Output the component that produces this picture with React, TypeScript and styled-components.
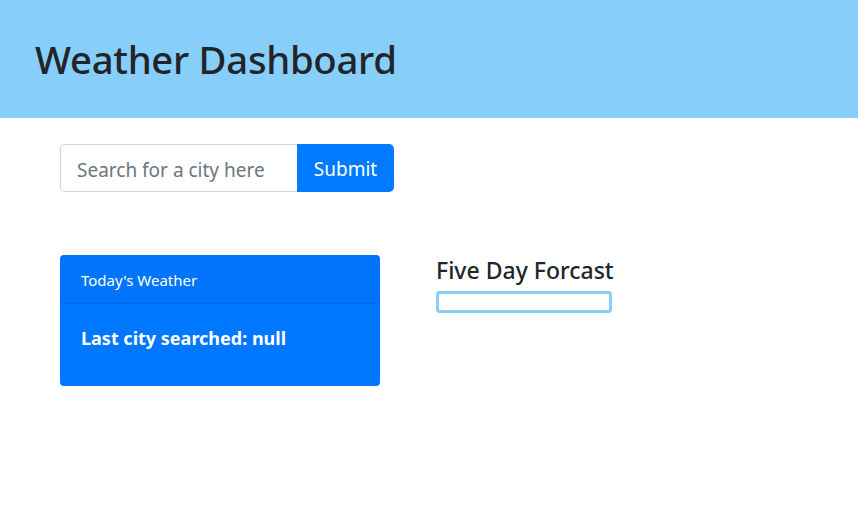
import React from "react";
import styled, { createGlobalStyle } from "styled-components";

const Global = createGlobalStyle`
  html, body { margin: 0; padding: 0; background: #fff; }
  body { font-family: "Noto Sans", "Open Sans", sans-serif; color: #212529; }
  * { box-sizing: border-box; }
`;

const Header = styled.header`
  background: #87cefa;
  height: 118px;
  display: flex;
  align-items: center;
  padding-left: 35px;
`;

const Title = styled.h1`
  margin: 0;
  font-size: 38.3px;
  font-weight: 500;
  color: #212529;
  letter-spacing: -0.3px;
`;

const Main = styled.main`
  padding: 26px 0 0 60px;
`;

const SearchForm = styled.form`
  display: flex;
  height: 48px;
`;

const SearchInput = styled.input`
  width: 237px;
  height: 48px;
  border: 1px solid #ced4da;
  border-right: none;
  border-radius: 5px 0 0 5px;
  padding: 3px 16px 0 16px;
  font-family: inherit;
  font-size: 19px;
  color: #495057;
  outline: none;
  &::placeholder { color: #6c757d; }
`;

const SubmitButton = styled.button`
  width: 97px;
  height: 48px;
  border: none;
  background: #007bff;
  color: #fff;
  font-family: inherit;
  font-size: 19px;
  border-radius: 0 5px 5px 0;
  padding: 2px 0 0 0;
`;

const Row = styled.div`
  display: flex;
  align-items: flex-start;
  gap: 56px;
  margin-top: 63px;
`;

const Card = styled.section`
  width: 320px;
  height: 131px;
  background: #0077ff;
  border-radius: 4px;
  color: #fff;
  overflow: hidden;
`;

const CardHeader = styled.div`
  height: 49px;
  padding: 1px 21px 0 21px;
  display: flex;
  align-items: center;
  font-size: 15px;
  border-bottom: 1px solid rgba(0, 0, 0, 0.08);
  background: rgba(0, 0, 0, 0.01);
`;

const CardBody = styled.div`
  padding: 22px 21px;
`;

const CardTitle = styled.h5`
  margin: 0;
  font-size: 18px;
  font-weight: 700;
  line-height: 24px;
`;

const Forecast = styled.section`
  display: flex;
  flex-direction: column;
  align-items: flex-start;
  padding-top: 0;
`;

const ForecastTitle = styled.h4`
  margin: 0;
  font-size: 23px;
  font-weight: 500;
  line-height: 30px;
  color: #212529;
`;

const ForecastBox = styled.div`
  width: 176px;
  height: 22px;
  border: 3px solid #87cefa;
  border-radius: 4px;
  margin-top: 6px;
`;

export default function App() {
  return (
    <>
      <Global />
      <Header>
        <Title>Weather Dashboard</Title>
      </Header>
      <Main>
        <SearchForm onSubmit={(e) => e.preventDefault()}>
          <SearchInput placeholder="Search for a city here" />
          <SubmitButton type="submit">Submit</SubmitButton>
        </SearchForm>
        <Row>
          <Card>
            <CardHeader>Today's Weather</CardHeader>
            <CardBody>
              <CardTitle>Last city searched: null</CardTitle>
            </CardBody>
          </Card>
          <Forecast>
            <ForecastTitle>Five Day Forcast</ForecastTitle>
            <ForecastBox />
          </Forecast>
        </Row>
      </Main>
    </>
  );
}
